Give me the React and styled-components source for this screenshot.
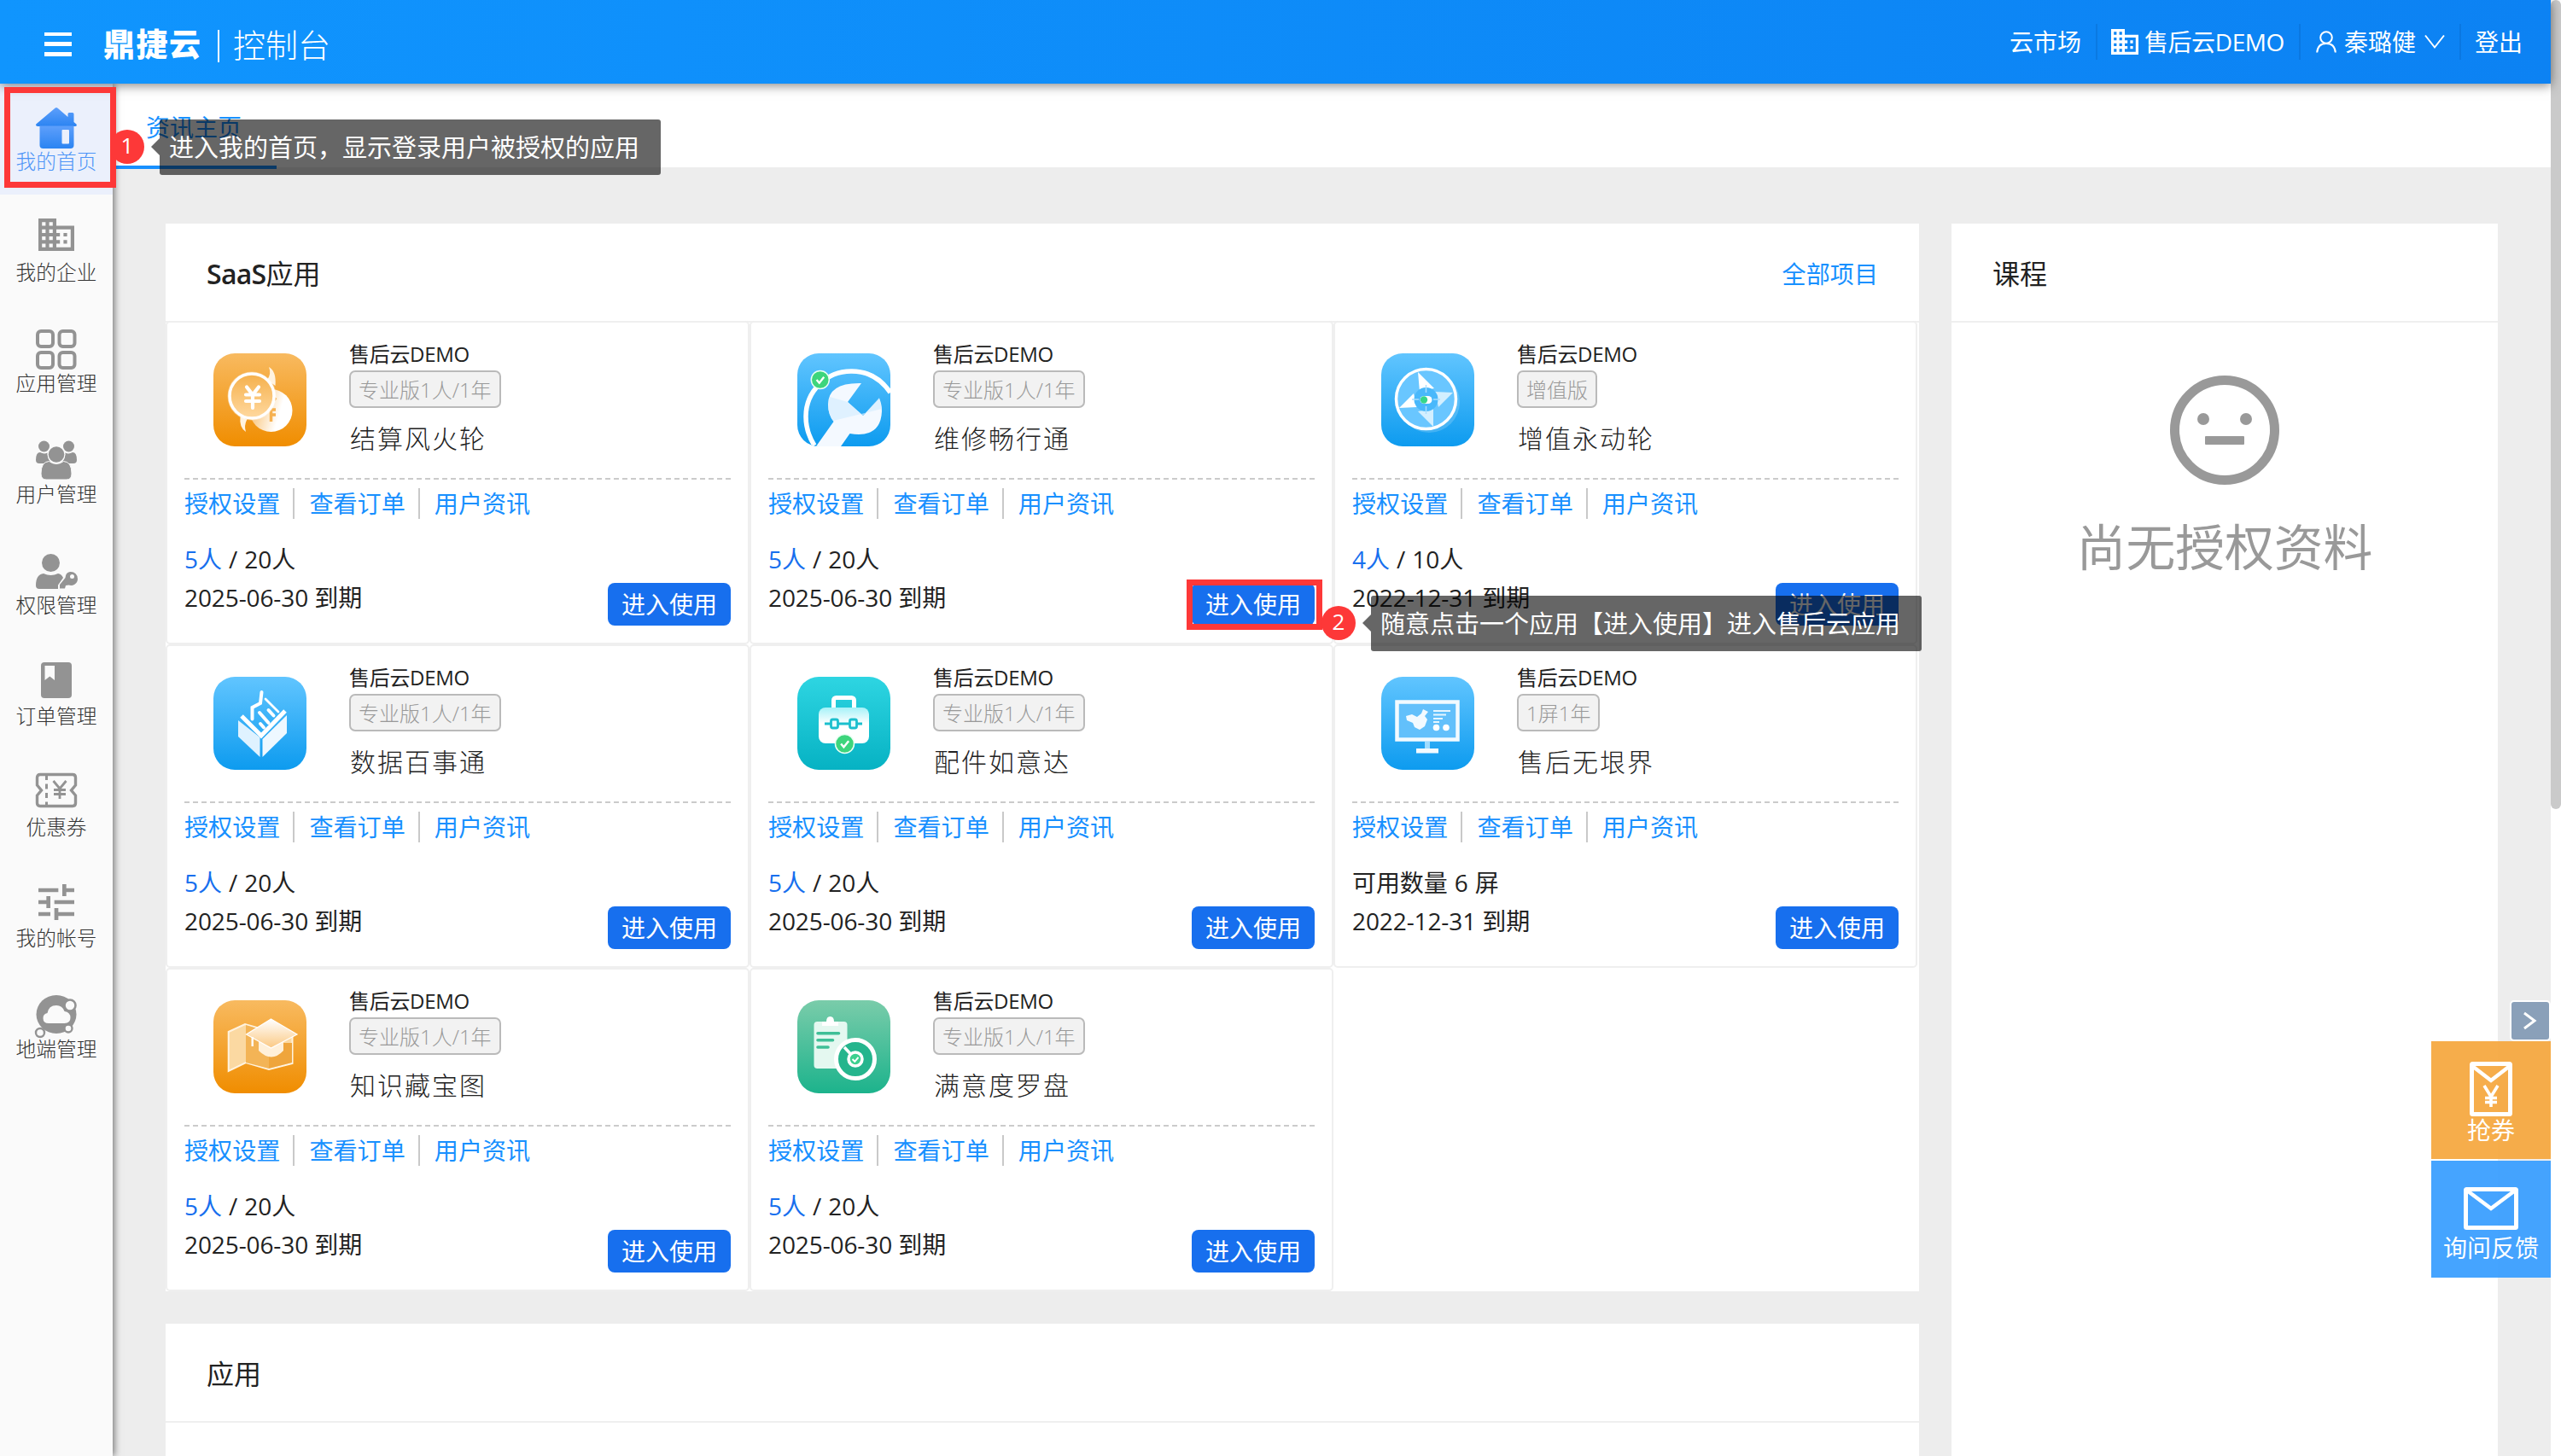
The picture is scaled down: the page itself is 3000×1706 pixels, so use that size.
import React from 'react';
import styled, { createGlobalStyle } from 'styled-components';

const GlobalStyle = createGlobalStyle`
  * { box-sizing: border-box; }
  body {
    margin: 0;
    background: #ededed;
    color: #222;
    font-family: "Open Sans", "Noto Sans CJK SC", sans-serif;
    font-size: 28px;
  }
`;

const Page = styled.div`
  position: relative;
  display: flex;
  width: 3000px;
  height: 1706px;
  overflow: hidden;
`;

const Main = styled.div`
  display: flex;
  flex-direction: column;
  width: 2988px;
`;

const ScrollTrack = styled.div`
  width: 12px;
  height: 100%;
  background: #fff;
`;

const ScrollThumb = styled.div`
  height: 948px;
  border-radius: 6px;
  background: #cacaca;
`;

/* Header */
const Header = styled.header`
  position: relative;
  z-index: 3;
  display: flex;
  flex: none;
  align-items: center;
  justify-content: space-between;
  height: 98px;
  padding: 0 33px 0 52px;
  color: #fff;
  background: linear-gradient(90deg, #1095fe 0%, #0c82f3 100%);
  box-shadow: 0 2px 12px rgba(0, 0, 0, 0.5);
`;

const Brand = styled.div`
  display: flex;
  align-items: center;
  padding-top: 5px;
`;

const Burger = styled.div`
  display: flex;
  flex-direction: column;
  justify-content: space-between;
  width: 32px;
  height: 28px;
`;

const BurgerLine = styled.span`
  height: 4.5px;
  background: #fff;
`;

const BrandName = styled.span`
  margin-left: 37px;
  font-size: 37px;
  font-weight: 900;
  line-height: 40px;
  letter-spacing: 1.5px;
`;

const BrandRule = styled.span`
  width: 2px;
  height: 38px;
  margin: 4px 16px 0 18.5px;
  background: #fff;
`;

const BrandSub = styled.span`
  font-size: 38px;
  font-weight: 300;
  line-height: 40px;
`;

const Nav = styled.nav`
  display: flex;
  align-items: center;
  height: 98px;
`;

const NavItem = styled.div`
  display: flex;
  align-items: center;
  font-size: 28px;
  line-height: 40px;
  letter-spacing: ${(p) => p.$tracking || 0}px;
  white-space: nowrap;
`;

const NavRule = styled.span`
  width: 2px;
  height: 42px;
  margin: 0 16px 0 17px;
  background: rgba(0, 60, 130, 0.16);
`;

const NavIcon = styled.svg`
  display: block;
  flex: none;
  margin-right: ${(p) => p.$right || 0}px;
  margin-left: ${(p) => p.$left || 0}px;
`;

/* Body */
const Body = styled.div`
  display: flex;
  flex: 1;
  min-height: 0;
`;

const Sidebar = styled.aside`
  position: relative;
  z-index: 2;
  flex: none;
  width: 132px;
  background: #fafafa;
  box-shadow: 2px 0 8px rgba(0, 0, 0, 0.5);
`;

const SideItem = styled.div`
  display: flex;
  flex-direction: column;
  align-items: center;
  height: 130px;
  padding-top: 24px;
  background: ${(p) => (p.$active ? '#ebf0fc' : 'transparent')};
  color: ${(p) => (p.$active ? '#4d94f7' : '#333')};
`;

const SideIcon = styled.svg`
  display: block;
  width: 54px;
  height: 54px;
  overflow: visible;
`;

const SideLabel = styled.span`
  margin-top: -1px;
  font-size: 23.7px;
  font-weight: 300;
  line-height: 28px;
`;

const Content = styled.main`
  flex: 1;
  min-width: 0;
`;

const TabBar = styled.div`
  display: flex;
  height: 98px;
  background: #fff;
`;

const Tab = styled.div`
  width: 192px;
  height: 100px;
  padding: 31px 0 0 39px;
  border-bottom: 4px solid #1890ff;
  color: #1890ff;
  font-size: 28px;
  line-height: 40px;
`;

const Columns = styled.div`
  display: flex;
  gap: 38px;
  padding: 66px 62px 0;
`;

const LeftColumn = styled.div`
  display: flex;
  flex-direction: column;
  gap: 38px;
  width: 2054px;
`;

const Panel = styled.section`
  width: ${(p) => p.$width}px;
  height: ${(p) => p.$height}px;
  background: #fff;
`;

const PanelHead = styled.div`
  display: flex;
  align-items: center;
  justify-content: space-between;
  height: 116px;
  padding: 3px 48px 0 48px;
  border-bottom: 2px solid #efefef;
`;

const PanelTitle = styled.h2`
  margin: 0;
  font-size: 32px;
  font-weight: 400;
  line-height: 44px;
`;

const Strong = styled.span`
  font-weight: 600;
  letter-spacing: -0.7px;
`;

const Link = styled.a`
  color: #1890ff;
  font-size: 28.1px;
  line-height: 36px;
`;

/* App cards */
const CardGrid = styled.div`
  display: grid;
  grid-template-columns: repeat(3, 684px);
  grid-auto-rows: 379px;
  margin-top: -2px;
`;

const Card = styled.article`
  padding: 0 20px;
  border: 2px solid #efefef;
  border-radius: 5px;
`;

const CardTop = styled.div`
  display: flex;
  align-items: flex-start;
  height: 182px;
  padding-left: 33px;
`;

const AppIcon = styled.svg`
  display: block;
  flex: none;
  width: 109px;
  height: 109px;
  margin: 36px 50px 0 1px;
`;

const CardMeta = styled.div`
  display: flex;
  flex-direction: column;
  align-items: flex-start;
  margin-top: 21px;
`;

const Tenant = styled.span`
  font-size: 24px;
  line-height: 32px;
  letter-spacing: -0.3px;
`;

const Edition = styled.span`
  height: 44px;
  margin-top: 3px;
  padding: 0 9px;
  border: 2px solid #bababa;
  border-radius: 7px;
  background: #f2f2f2;
  color: #999;
  font-size: 24px;
  font-weight: 300;
  line-height: 41px;
`;

const AppName = styled.span`
  margin: 16px 0 0 1px;
  font-size: 30px;
  font-weight: 300;
  line-height: 40px;
  letter-spacing: 2px;
`;

const Dashes = styled.div`
  height: 2px;
  background: repeating-linear-gradient(90deg, #cbcbcb 0 6px, #fff 6px 10.063px);
`;

const Actions = styled.div`
  display: flex;
  align-items: center;
  height: 56px;
`;

const ActionRule = styled.span`
  width: 2px;
  height: 36px;
  margin: 0 17px 0 15px;
  background: #c9c9c9;
`;

const CardBottom = styled.div`
  display: flex;
  justify-content: space-between;
  align-items: flex-start;
  padding-top: 15px;
`;

const InfoLine = styled.div`
  font-size: 28px;
  line-height: 45px;
  letter-spacing: -0.1px;
  word-spacing: ${(p) => p.$gap || 0}px;
`;

const Used = styled.span`
  color: #176fee;
`;

const EnterButton = styled.button`
  width: 144px;
  height: 50px;
  margin: 50px 0 0;
  padding: 0;
  border: 0;
  border-radius: 8px;
  background: #176fee;
  color: #fff;
  font: inherit;
  line-height: 50px;
`;

const Empty = styled.div`
  display: flex;
  flex-direction: column;
  align-items: center;
  padding-top: 60px;
  color: #999;
  font-size: 57.8px;
  line-height: 80px;
`;

const EmptyFace = styled.svg`
  display: block;
  margin-bottom: 31px;
`;

/* Floating shortcuts */
const Floats = styled.div`
  position: absolute;
  z-index: 4;
  top: 1172px;
  left: 2848px;
  display: flex;
  flex-direction: column;
  align-items: flex-end;
  width: 140px;
`;

const Collapse = styled.div`
  display: flex;
  align-items: center;
  justify-content: center;
  width: 48px;
  height: 48px;
  border: 2px solid #fff;
  border-radius: 5px;
  background: #8aa0b9;
`;

const Shortcut = styled.div`
  display: flex;
  flex-direction: column;
  align-items: center;
  width: 140px;
  height: ${(p) => p.$height}px;
  margin-bottom: 2px;
  padding-top: ${(p) => p.$pad}px;
  background: ${(p) => p.$color};
  color: #fff;
  font-size: 28px;
  line-height: ${(p) => p.$line}px;
`;

/* Guide annotations */
const Highlight = styled.div`
  position: absolute;
  z-index: 5;
  left: ${(p) => p.$x}px;
  top: ${(p) => p.$y}px;
  width: ${(p) => p.$w}px;
  height: ${(p) => p.$h}px;
  border: 7px solid #fd3838;
`;

const Step = styled.div`
  position: absolute;
  z-index: 6;
  left: ${(p) => p.$x}px;
  top: ${(p) => p.$y}px;
  width: 40px;
  height: 40px;
  border-radius: 50%;
  background: #fd3838;
  color: #fff;
  font-size: 26px;
  line-height: 36px;
  text-align: center;
`;

const Tip = styled.div`
  position: absolute;
  z-index: 5;
  left: ${(p) => p.$x}px;
  top: ${(p) => p.$y}px;
  width: ${(p) => p.$w}px;
  height: 65px;
  padding-left: 11px;
  border-radius: 3px;
  background: rgba(0, 0, 0, 0.6);
  color: #fff;
  font-size: 29px;
  line-height: 65px;
  white-space: nowrap;

  &::before {
    content: '';
    position: absolute;
    left: -10px;
    top: 22px;
    border: 10px solid transparent;
    border-left-width: 0;
    border-right-color: rgba(0, 0, 0, 0.6);
  }
`;

const BUSINESS =
  'M12 7V3H2v18h20V7H12zM6 19H4v-2h2v2zm0-4H4v-2h2v2zm0-4H4V9h2v2zm0-4H4V5h2v2zm4 12H8v-2h2v2zm0-4H8v-2h2v2zm0-4H8V9h2v2zm0-4H8V5h2v2zm10 12h-8v-2h2v-2h-2v-2h2v-2h-2V9h8v10zm-2-8h-2v2h2v-2zm0 4h-2v2h2v-2z';
const TUNE =
  'M3 17v2h6v-2H3zM3 5v2h10V5H3zm10 16v-2h8v-2h-8v-2h-2v6h2zM7 9v2H3v2h4v2h2V9H7zm14 4v-2H11v2h10zm-6-4h2V7h4V5h-4V3h-2v6z';

const G = '#939393';

const sideItems = [
  {
    label: '我的首页',
    active: true,
    icon: (
      <>
        <defs>
          <linearGradient id="roof" x1="0" y1="0" x2="0" y2="1">
            <stop offset="0" stopColor="#5e9ffb" />
            <stop offset="1" stopColor="#2b84f2" />
          </linearGradient>
        </defs>
        <path d="M24.5 5.5q2.500-3 5 0L40.500 15V11.500q0-1.500 1.500-1.500h4q1.500 0 1.500 1.500V21l3 2.500q1 2.500-1.500 2.500H5q-3-.5-1.500-2.700z" fill="url(#roof)" />
        <path d="M7.500 25.500h40V48q0 4-4 4h-32q-4 0-4-4z" fill="url(#roof)" />
        <rect x="33.500" y="30" width="8.500" height="16.500" rx="1" fill="#ebf0fc" />
      </>
    ),
  },
  { label: '我的企业', icon: <path d={BUSINESS} fill={G} transform="translate(1.800 -2.200) scale(2.100)" /> },
  {
    label: '应用管理',
    icon: (
      <g fill="none" stroke={G} strokeWidth="4">
        <rect x="5" y="6" width="18" height="18" rx="4" />
        <rect x="30.500" y="6" width="18" height="18" rx="4" />
        <rect x="5" y="31" width="18" height="18" rx="4" />
        <rect x="30.500" y="31" width="18" height="18" rx="4" />
      </g>
    ),
  },
  {
    label: '用户管理',
    icon: (
      <g fill={G}>
        <circle cx="12.500" cy="11" r="6.500" />
        <circle cx="41.500" cy="11" r="6.500" />
        <path d="M3 27q0-9 5-9 4.500 2.500 8.500.5.500 7 3.500 10.500-3 2-6 2H7q-4 0-4-4zM51 27q0-9-5-9-4.500 2.500-8.500.5-.5 7-3.500 10.500 3 2 6 2h7q4 0 4-4z" />
        <circle cx="27" cy="20.500" r="10.500" fill="#fafafa" />
        <circle cx="27" cy="20.500" r="9.300" />
        <path d="M9 43q0-14 9.500-14.500 8.500 6 17 0Q45 29 45 43q0 7-6 7H15q-6 0-6-7z" stroke="#fafafa" strokeWidth="1" />
      </g>
    ),
  },
  {
    label: '权限管理',
    icon: (
      <g fill={G}>
        <circle cx="20.500" cy="17.500" r="10.500" />
        <path d="M3 44q0-13 9-14 8.500 4 17 0 4 .3 6 5l-6 8.500V48H7q-4 0-4-4z" />
        <path d="M43 28a8 8 0 1 1-1.500 15.500L38 44l-1 3.500h-6V43l6.500-8q.5-6.500 5.500-7z" />
        <circle cx="45.500" cy="33.500" r="2.500" fill="#fafafa" />
      </g>
    ),
  },
  {
    label: '订单管理',
    icon: (
      <>
        <rect x="9" y="4" width="36" height="42" rx="4" fill={G} />
        <path d="M13.500 8h11.500v17l-5.700-4.500-5.800 4.500z" fill="#fafafa" />
      </>
    ),
  },
  {
    label: '优惠券',
    icon: (
      <g fill="none" stroke={G} strokeWidth="3.400">
        <path d="M8 5.500h38q3.500 0 3.500 3.500v9l-5 6 5 6v9q0 3.500-3.500 3.500H8q-3.500 0-3.500-3.500v-9l5-6-5-6V9q0-3.500 3.500-3.500z" />
        <path d="M15.500 6v36" strokeDasharray="6 4.500" strokeWidth="3" />
        <path d="M23.500 13l7.500 9 7.500-9M31 22v12M24 23.500h14M24 28.500h14" strokeWidth="2.800" />
      </g>
    ),
  },
  { label: '我的帐号', icon: <path d={TUNE} fill={G} transform="translate(-1 -3) scale(2.333)" /> },
  {
    label: '地端管理',
    icon: (
      <>
        <ellipse cx="27" cy="26.500" rx="23.500" ry="22.500" fill={G} />
        <path d="M18 37q-6.500 0-6.500-6 0-5 5-6 1.500-9 10.500-9 7 0 9.500 7 7 1 7 7.500T36.500 37z" fill="#fafafa" />
        <circle cx="43" cy="16" r="6.500" fill="#fafafa" stroke={G} strokeWidth="2.600" />
        <circle cx="41" cy="43" r="4.500" fill="#fafafa" stroke={G} strokeWidth="2.400" />
        <circle cx="8" cy="48" r="5" fill="#fafafa" stroke={G} strokeWidth="2.400" />
      </>
    ),
  },
];

const tones = {
  orange: ['#f8ba60', '#f08d00'],
  blue: ['#61c5ff', '#0d9bef'],
  teal: ['#2ed5e2', '#06b2c3'],
  green: ['#7accaa', '#1cb38c'],
};

const Check = ({ x, y, r }) => (
  <g>
    <circle cx={x} cy={y} r={r} fill="#3dd57c" stroke="#e9fff4" strokeWidth="1.500" />
    <path d={`M${x - r * 0.4} ${y}l${r * 0.3} ${r * 0.35} ${r * 0.52}-${r * 0.65}`} fill="none" stroke="#fff" strokeWidth="2.400" />
  </g>
);

const art = {
  coins: (
    <>
      <path d="M65 16q9 5 7.500 22l-10-7q6-6 2.500-15zM38 92q-8-5-6.500-18l8 3q-4 8-1.500 15z" fill="#fff3e0" />
      <circle cx="67.500" cy="67" r="25" fill="url(#coinBack)" />
      <path d="M70 56l3-4M67.500 66v14M66 66h7M66 72h7" stroke="#f6b150" strokeWidth="3.500" fill="none" />
      <circle cx="45" cy="50" r="28.500" fill="#fff" fillOpacity="0.350" />
      <circle cx="45" cy="50" r="26" fill="url(#coinFace)" stroke="#fff" strokeWidth="3.500" />
      <path d="M39 39.500l7 9 7-9M46 48.500V64M38 48.500h16M38 56h16" stroke="#fff" strokeWidth="4.200" strokeLinecap="round" fill="none" />
    </>
  ),
  wrench: (
    <>
      <path d="M20 108Q10 92 10 74a53 53 0 0 1 54-53q28 0 45 25" fill="none" stroke="#fff" strokeWidth="5.500" />
      <path d="M75 35Q36 34 36 60q0 12 6.500 20L22 109h29l10.500-15q36 6 37.500-26 0-9-3-15L77 73 59 57z" fill="#f4f9ff" />
      <path d="M42 79l57-14-3-13-19 21-18-16-21-6q-5 15 4 28z" fill="#d5eeff" fillOpacity="0.700" />
      <Check x={26.800} y={31} r={10.500} />
    </>
  ),
  compass: (
    <>
      <circle cx="56" cy="57" r="36" fill="#fff" fillOpacity="0.180" />
      <circle cx="52.500" cy="53.500" r="35" fill="#69c6ff" stroke="#fff" strokeWidth="3.500" />
      <path d="M43 22l19 19-17 4zM21 64l17-17 4 16z" fill="#fff" />
      <path d="M84 46L63 45l4 18zM61 86L43 68l18-3z" fill="#d3efff" />
      <circle cx="52.500" cy="54" r="14" fill="#49b8fb" />
      <path d="M52.500 37v9M52.500 62v9M36 54h8M61 54h8" stroke="#a8deff" strokeWidth="1.500" />
      <rect x="45.500" y="50" width="14" height="9" rx="4.500" fill="#fff" />
      <circle cx="50" cy="54.500" r="4.200" fill="#35d68a" />
    </>
  ),
  book: (
    <>
      <path d="M29 51l25.500 20v23L29 70z" fill="#dff2ff" />
      <path d="M57.500 73L86 45v21L57.500 94z" fill="#eef8ff" />
      <g fill="none" stroke="#fff" strokeLinecap="round">
        <path d="M33 46l23 23 28-29" strokeWidth="5" strokeLinecap="butt" />
        <path d="M56.500 18L55 31l-9.500 5v13.500" strokeWidth="4" />
        <path d="M61 26l15 15" strokeWidth="2.800" />
        <path d="M64.500 39l6 6.500M54 42l10.500 12M55 55l4 4.500" strokeWidth="4" />
      </g>
    </>
  ),
  toolbox: (
    <>
      <rect x="42.500" y="24.500" width="24" height="18" rx="3" fill="none" stroke="#fff" strokeWidth="5" />
      <rect x="25" y="36" width="59" height="42" rx="8" fill="url(#boxFace)" />
      <g stroke="#1bbfce" strokeWidth="2.800" fill="#e8fdff">
        <path d="M32 55h44" />
        <rect x="39.500" y="50" width="8" height="10" rx="2" />
        <rect x="61.500" y="50" width="8" height="10" rx="2" />
      </g>
      <Check x={55.500} y={78.500} r={11} />
    </>
  ),
  monitor: (
    <>
      <rect x="18.500" y="29.500" width="71" height="44" fill="#62c0fb" stroke="#f2faff" strokeWidth="4.500" />
      <path d="M29 46l7-2 6 3 5-4 2-5 6 3-4 5 3 4-3 8-6 4-6-3-2-5-7-3z" fill="#f2faff" />
      <path d="M61 40h20M61 44.500h15M61 49h11M61 53h7" stroke="#e6f6ff" strokeWidth="2.200" />
      <circle cx="64.500" cy="59.500" r="3.800" fill="#fff" />
      <circle cx="76" cy="59.500" r="3.800" fill="#fff" />
      <path d="M51 76h6v8h-6z" fill="#9fdcff" />
      <path d="M41 84h26v5.500H41z" fill="#f2faff" />
    </>
  ),
  map: (
    <>
      <path d="M17.700 37L37 28l28 8 27.500 6v32L65 81 38 73 17.700 83z" fill="#fbd9a2" stroke="#fff3df" strokeWidth="2" />
      <path d="M38 29l27 8v43l-27-7z" fill="#f3b456" />
      <path d="M65 50h27v23l-27 7z" fill="#efa53c" />
      <path d="M53 49h29v10q-14 15-29 0z" fill="#fff0d9" />
      <path d="M67.500 22L98 40 67.500 56 38.500 40z" fill="url(#capFace)" stroke="#fff" strokeWidth="1.200" />
      <path d="M45.700 43v11" stroke="#fff" strokeWidth="2.400" />
    </>
  ),
  clipboard: (
    <>
      <rect x="19.500" y="25" width="39" height="55" rx="4" fill="#e4f8f0" />
      <path d="M29 30v-5h5q0-6 4.500-6t4.500 6h5v5z" fill="#fff" />
      <path d="M24 38.700h24.500M24 46.800h17.500M24 55h12" stroke="#3fbf97" strokeWidth="3.600" strokeLinecap="round" />
      <circle cx="68" cy="69" r="22.500" fill="#25b58d" stroke="#fff" strokeWidth="5" />
      <path d="M55 55l13 14" stroke="#fff" strokeWidth="3.500" />
      <circle cx="68" cy="69" r="8" fill="#3dd08f" stroke="#fff" strokeWidth="3.500" />
      <path d="M64.500 69l2.800 2.800 4.200-5" fill="none" stroke="#fff" strokeWidth="2" />
    </>
  ),
};

const apps = [
  { name: '结算风火轮', tone: 'orange', art: 'coins' },
  { name: '维修畅行通', tone: 'blue', art: 'wrench' },
  { name: '增值永动轮', tone: 'blue', art: 'compass', edition: '增值版', used: '4人', total: ' / 10人', date: '2022-12-31' },
  { name: '数据百事通', tone: 'blue', art: 'book' },
  { name: '配件如意达', tone: 'teal', art: 'toolbox' },
  { name: '售后无垠界', tone: 'blue', art: 'monitor', edition: '1屏1年', used: '', total: '可用数量 6 屏', date: '2022-12-31' },
  { name: '知识藏宝图', tone: 'orange', art: 'map' },
  { name: '满意度罗盘', tone: 'green', art: 'clipboard' },
];

function AppCard({ app }) {
  const { name, tone, edition = '专业版1人/1年', used = '5人', total = ' / 20人', date = '2025-06-30' } = app;
  return (
    <Card>
      <CardTop>
        <AppIcon viewBox="0 0 109 109">
          <defs>
            <linearGradient id={`bg-${app.art}`} x1="0" y1="0" x2="0" y2="1">
              <stop offset="0" stopColor={tones[tone][0]} />
              <stop offset="1" stopColor={tones[tone][1]} />
            </linearGradient>
            <linearGradient id="coinFace" x1="0" y1="0" x2="0" y2="1">
              <stop offset="0" stopColor="#f5b04b" />
              <stop offset="1" stopColor="#ffd9a0" />
            </linearGradient>
            <linearGradient id="coinBack" x1="0" y1="0" x2="1" y2="0.3">
              <stop offset="0.200" stopColor="#f9c57c" />
              <stop offset="0.800" stopColor="#fff" />
            </linearGradient>
            <linearGradient id="boxFace" x1="0" y1="0" x2="0" y2="1">
              <stop offset="0" stopColor="#a5f2f8" />
              <stop offset="0.450" stopColor="#fff" />
            </linearGradient>
            <linearGradient id="capFace" x1="0" y1="0" x2="0" y2="1">
              <stop offset="0" stopColor="#fff" />
              <stop offset="1" stopColor="#fbc983" />
            </linearGradient>
            <clipPath id={`clip-${app.art}`}>
              <rect width="109" height="109" rx="25" />
            </clipPath>
          </defs>
          <g clipPath={`url(#clip-${app.art})`}>
            <rect width="109" height="109" fill={`url(#bg-${app.art})`} />
            {art[app.art]}
          </g>
        </AppIcon>
        <CardMeta>
          <Tenant>售后云DEMO</Tenant>
          <Edition>{edition}</Edition>
          <AppName>{name}</AppName>
        </CardMeta>
      </CardTop>
      <Dashes />
      <Actions>
        <Link>授权设置</Link>
        <ActionRule />
        <Link>查看订单</Link>
        <ActionRule />
        <Link>用户资讯</Link>
      </Actions>
      <CardBottom>
        <div>
          <InfoLine $gap={1}>
            <Used>{used}</Used>
            {total}
          </InfoLine>
          <InfoLine>{date} 到期</InfoLine>
        </div>
        <EnterButton>进入使用</EnterButton>
      </CardBottom>
    </Card>
  );
}

export default function App() {
  return (
    <Page>
      <GlobalStyle />
      <Main>
        <Header>
          <Brand>
            <Burger>
              <BurgerLine />
              <BurgerLine />
              <BurgerLine />
            </Burger>
            <BrandName>鼎捷云</BrandName>
            <BrandRule />
            <BrandSub>控制台</BrandSub>
          </Brand>
          <Nav>
            <NavItem>云市场</NavItem>
            <NavRule />
            <NavItem $tracking={-0.4}>
              <NavIcon width="32" height="30" viewBox="2 3 20 18" preserveAspectRatio="none" $right={7}>
                <path d={BUSINESS} fill="#fff" />
              </NavIcon>
              售后云DEMO
            </NavItem>
            <NavRule />
            <NavItem>
              <NavIcon width="24" height="26" viewBox="0 0 24 26" $left={2} $right={9}>
                <circle cx="12" cy="8" r="6.800" fill="none" stroke="#fff" strokeWidth="2" />
                <path d="M1.200 25.500Q2 15 12 15t10.800 10.500" fill="none" stroke="#fff" strokeWidth="2" />
              </NavIcon>
              秦璐健
              <NavIcon width="24" height="18" viewBox="0 0 24 18" $left={10} $right={0}>
                <path d="M1 1.500l11 14 11-14" fill="none" stroke="#fff" strokeWidth="2" />
              </NavIcon>
            </NavItem>
            <NavRule />
            <NavItem>登出</NavItem>
          </Nav>
        </Header>
        <Body>
          <Sidebar>
            {sideItems.map((item) => (
              <SideItem key={item.label} $active={item.active}>
                <SideIcon viewBox="0 0 54 54">{item.icon}</SideIcon>
                <SideLabel>{item.label}</SideLabel>
              </SideItem>
            ))}
          </Sidebar>
          <Content>
            <TabBar>
              <Tab>资讯主页</Tab>
            </TabBar>
            <Columns>
              <LeftColumn>
                <Panel $width={2054} $height={1251}>
                  <PanelHead>
                    <PanelTitle>
                      <Strong>SaaS</Strong>应用
                    </PanelTitle>
                    <Link>全部项目</Link>
                  </PanelHead>
                  <CardGrid>
                    {apps.map((app) => (
                      <AppCard key={app.name} app={app} />
                    ))}
                  </CardGrid>
                </Panel>
                <Panel $width={2054} $height={300}>
                  <PanelHead>
                    <PanelTitle>应用</PanelTitle>
                  </PanelHead>
                </Panel>
              </LeftColumn>
              <Panel $width={640} $height={1600}>
                <PanelHead>
                  <PanelTitle>课程</PanelTitle>
                </PanelHead>
                <Empty>
                  <EmptyFace width="132" height="132" viewBox="0 0 132 132">
                    <circle cx="66" cy="66" r="58.500" fill="none" stroke="#999" strokeWidth="11" />
                    <circle cx="41" cy="53" r="7" fill="#999" />
                    <circle cx="91" cy="53" r="7" fill="#999" />
                    <rect x="43" y="73" width="46" height="10" rx="1" fill="#999" />
                  </EmptyFace>
                  尚无授权资料
                </Empty>
              </Panel>
            </Columns>
          </Content>
        </Body>
      </Main>
      <ScrollTrack>
        <ScrollThumb />
      </ScrollTrack>

      <Floats>
        <Collapse>
          <svg width="16" height="22" viewBox="0 0 16 22">
            <path d="M1 2l12 9-12 9" fill="none" stroke="#fff" strokeWidth="3" />
          </svg>
        </Collapse>
        <Shortcut $height={138} $pad={24} $line={32} $color="rgba(245, 166, 60, 0.92)">
          <svg width="52" height="64" viewBox="0 0 52 64">
            <rect x="3.500" y="2.500" width="45" height="59" rx="1" fill="none" stroke="#fff" strokeWidth="5" />
            <path d="M4 5l22 17L48 5" fill="none" stroke="#fff" strokeWidth="4.500" />
            <path d="M18 28l8 13 8-13M26 41v12M19 42.500h14M19 47.500h14" fill="none" stroke="#fff" strokeWidth="3.600" />
          </svg>
          抢券
        </Shortcut>
        <Shortcut $height={137} $pad={30} $line={41} $color="rgba(53, 156, 255, 0.92)">
          <svg width="66" height="52" viewBox="0 0 66 52">
            <rect x="3.500" y="3.500" width="59" height="45" rx="1" fill="none" stroke="#fff" strokeWidth="5" />
            <path d="M5 5l28 21L61 5" fill="none" stroke="#fff" strokeWidth="4.500" />
          </svg>
          询问反馈
        </Shortcut>
      </Floats>

      <Highlight $x={5} $y={102} $w={131} $h={118} />
      <Step $x={129} $y={152}>1</Step>
      <Tip $x={187} $y={140} $w={587}>进入我的首页，显示登录用户被授权的应用</Tip>

      <Highlight $x={1390} $y={679} $w={159} $h={59} />
      <Step $x={1548} $y={710}>2</Step>
      <Tip $x={1606} $y={698} $w={645}>随意点击一个应用【进入使用】进入售后云应用</Tip>
    </Page>
  );
}
